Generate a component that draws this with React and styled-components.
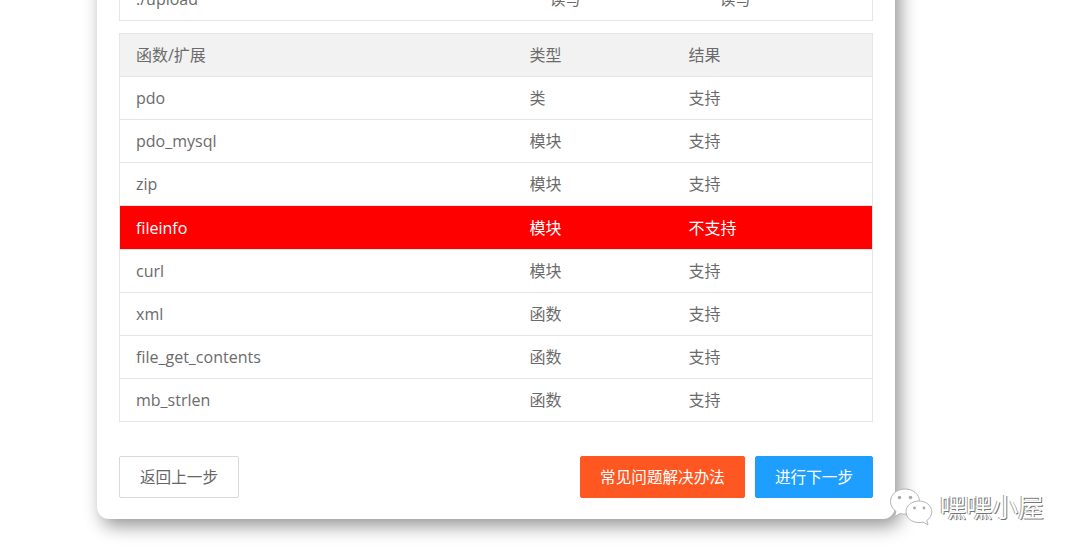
import React from "react";
import styled, { createGlobalStyle } from "styled-components";

const GlobalStyle = createGlobalStyle`
  html, body {
    margin: 0;
    padding: 0;
    background: #fff;
    overflow: hidden;
  }
  body {
    font-family: "Open Sans", "Noto Sans CJK SC", "Liberation Sans", sans-serif;
  }
`;

const Page = styled.div`
  position: relative;
  width: 1080px;
  height: 556px;
  overflow: hidden;
  background: #fff;
`;

const Card = styled.div`
  box-sizing: border-box;
  width: 798px;
  height: 561px;
  margin: -42px 0 0 97px;
  padding: 19px 22px 0;
  background: #fff;
  border-radius: 12px;
  box-shadow: 5px 7px 18px rgba(0, 0, 0, 0.42);
`;

const Table = styled.table`
  width: 753px;
  table-layout: fixed;
  border-collapse: collapse;
  margin-bottom: 12px;
  font-size: 16px;
  color: #666;
`;

const Row = styled.tr`
  height: 43.1px;
  background: ${(p) => (p.$danger ? "#f00" : p.$head ? "#f2f2f2" : "#fff")};
  color: ${(p) => (p.$danger ? "#fff" : "#6b6b6b")};
`;

const Cell = styled.td`
  padding: 0 16px;
  line-height: 22px;
  border-top: 1px solid #e6e6e6;
  border-bottom: 1px solid #e6e6e6;
  border-left: ${(p) => (p.$first ? "1px solid #e6e6e6" : "none")};
  border-right: ${(p) => (p.$last ? "1px solid #e6e6e6" : "none")};
`;

const Footer = styled.div`
  display: flex;
  align-items: center;
  margin-top: 34px;
`;

const Button = styled.button`
  box-sizing: border-box;
  height: 42px;
  width: ${(p) => p.$width}px;
  margin-left: ${(p) => p.$gap || 0}px;
  padding: 0;
  border: 1px solid ${(p) => p.$border || p.$bg};
  border-radius: 2px;
  background: ${(p) => p.$bg};
  color: ${(p) => p.$color};
  font-family: inherit;
  font-size: 15.6px;
`;

const Watermark = styled.div`
  position: absolute;
  left: 889px;
  top: 487px;
  display: flex;
  align-items: center;
  gap: 6px;
`;

const WatermarkText = styled.span`
  font-size: 26px;
  line-height: 36px;
  color: #fff;
  text-shadow: 1px 1px 0 #777, -1px 0 0 #a0a0a0;
`;

const topRow = ["./upload", "读写", "读写"];

const rows = [
  ["pdo", "类", "支持"],
  ["pdo_mysql", "模块", "支持"],
  ["zip", "模块", "支持"],
  ["fileinfo", "模块", "不支持", true],
  ["curl", "模块", "支持"],
  ["xml", "函数", "支持"],
  ["file_get_contents", "函数", "支持"],
  ["mb_strlen", "函数", "支持"],
];

const Cols = ({ widths }) => (
  <colgroup>
    {widths.map((w, i) => (
      <col key={i} width={w} />
    ))}
  </colgroup>
);

const WechatIcon = () => (
  <svg width="45" height="40" viewBox="0 0 45 40" fill="#fff" stroke="#b5b5b5" strokeWidth="1">
    <path d="M16 2C7.500 2 1.500 7.600 1.500 14.500c0 4 2.100 7.400 5.400 9.700L5.600 29.500l5.600-3c1.500.4 3 .7 4.800.7 8.500 0 14.500-5.600 14.500-12.700C30.500 7.600 24.500 2 16 2z" />
    <path d="M30 14c-7.300 0-13 4.800-13 10.800S22.700 35.600 30 35.600c1.400 0 2.700-.2 4-.6l5 3-1.200-4.600c3-2 5-5 5-8.600C42.800 18.800 37.300 14 30 14z" />
    <circle cx="10.500" cy="10.500" r="1.800" fill="#aaa" stroke="none" />
    <circle cx="21.500" cy="10.500" r="1.800" fill="#aaa" stroke="none" />
    <circle cx="25.500" cy="21" r="1.400" fill="#aaa" stroke="none" />
    <circle cx="35" cy="21" r="1.400" fill="#aaa" stroke="none" />
  </svg>
);

const App = () => (
  <Page>
    <GlobalStyle />
    <Card>
      <Table>
        <Cols widths={[414, 170, 169]} />
        <tbody>
          <Row>
            {topRow.map((t, i) => (
              <Cell key={i} $first={i === 0} $last={i === 2}>{t}</Cell>
            ))}
          </Row>
        </tbody>
      </Table>
      <Table>
        <Cols widths={[394, 159, 200]} />
        <tbody>
          <Row $head>
            <Cell $first>函数/扩展</Cell>
            <Cell>类型</Cell>
            <Cell $last>结果</Cell>
          </Row>
          {rows.map(([name, type, result, danger]) => (
            <Row key={name} $danger={danger}>
              <Cell $first>{name}</Cell>
              <Cell>{type}</Cell>
              <Cell $last>{result}</Cell>
            </Row>
          ))}
        </tbody>
      </Table>
      <Footer>
        <Button $width={120} $bg="#fff" $border="#d9d9d9" $color="#666">返回上一步</Button>
        <Button $width={165} $gap={341} $bg="#ff5722" $color="#fff">常见问题解决办法</Button>
        <Button $width={118} $gap={10} $bg="#1e9fff" $color="#fff">进行下一步</Button>
      </Footer>
    </Card>
    <Watermark>
      <WechatIcon />
      <WatermarkText>嘿嘿小屋</WatermarkText>
    </Watermark>
  </Page>
);

export default App;
